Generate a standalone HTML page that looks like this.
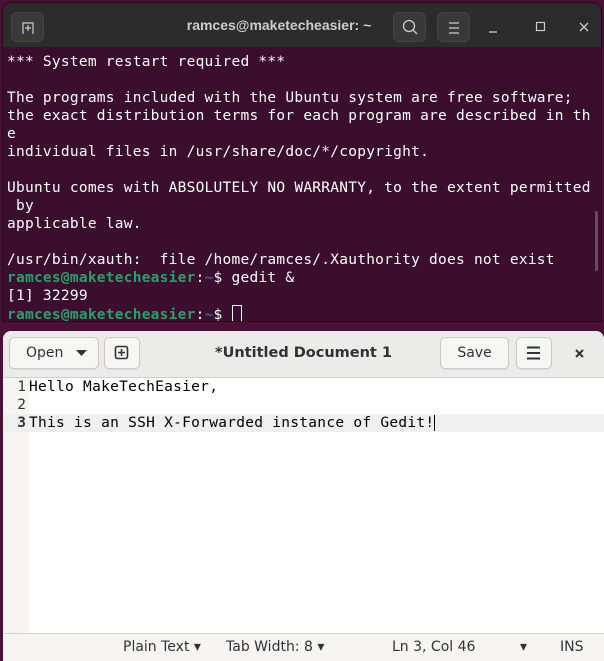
<!DOCTYPE html>
<html><head><meta charset="utf-8"><style>
*{margin:0;padding:0;box-sizing:border-box}
body{width:604px;height:661px;overflow:hidden;background:#4a1036;font-family:"Liberation Sans","DejaVu Sans",sans-serif;position:relative}
.term{position:absolute;left:2px;top:2px;width:600px;height:320px;background:#3a0e2c;border-radius:10px 10px 0 0;overflow:hidden;border:1px solid #2a0820}
.tbar{height:44px;background:#2c2c2c;position:relative;color:#ddd}
.tbtn{position:absolute;top:9px;width:33px;height:30px;border-radius:6px;background:#393939;border:1px solid #444}
.ttl{position:absolute;left:0;width:552px;text-align:center;top:14px;font-weight:bold;font-size:14px;color:#ccc;font-family:"Liberation Sans",sans-serif}
.tt{font-family:"DejaVu Sans Mono","Liberation Mono",monospace;font-size:14.5px;line-height:18px;color:#fff;white-space:pre;padding:6px 0 0 4px;letter-spacing:0.25px}
.g{color:#26a269;font-weight:bold}.b{color:#3465a4;font-weight:bold}
.ged{position:absolute;left:3px;top:331px;width:601px;height:330px;background:#fff;border-radius:8px 8px 0 0;overflow:hidden}
.hb{height:47px;background:#ebebea;border-bottom:1px solid #cfcfcd;position:relative;color:#2e3436;font-family:"DejaVu Sans",sans-serif}
.btn{position:absolute;top:6px;height:32px;border-radius:5px;background:#f6f6f5;border:1px solid #cdc7c2;font-size:14px;line-height:30px;text-align:center;box-shadow:0 1px 1px rgba(0,0,0,.07)}
.gut{position:absolute;left:0;top:47px;width:23px;bottom:28px;background:#f6f5f4}
.ed{position:absolute;left:0;top:47px;right:0;font-family:"DejaVu Sans Mono","Liberation Mono",monospace;font-size:14.5px;line-height:18px;color:#000}
.ln{display:flex;height:18px;white-space:pre}.ln span:first-child{width:26px;text-align:right;padding-right:3px;color:#333}
.ln span+span{letter-spacing:0.28px}
.cur{background:#efefef}
.sb{position:absolute;left:0;right:0;bottom:0;height:28px;background:#f6f5f4;border-top:1px solid #d6d1cd;font-family:"DejaVu Sans",sans-serif;font-size:14px;color:#2e3436}
.sb span{position:absolute;top:5px}
</style></head><body>
<div class="term">
 <div class="tbar">
  <div class="tbtn" style="left:8px"><svg width="33" height="30"><path d="M11 21V10h10v11M16 12v6M13 15h6" stroke="#ccc" fill="none" stroke-width="1.2"/></svg></div>
  <div class="ttl">ramces@maketecheasier: ~</div>
  <div class="tbtn" style="left:390px"><svg width="33" height="30"><circle cx="15" cy="13" r="5.5" stroke="#ccc" fill="none" stroke-width="1.3"/><path d="M19 17l4 4" stroke="#ccc" stroke-width="1.3"/></svg></div>
  <div class="tbtn" style="left:434px"><svg width="33" height="30"><path d="M11 10h10M11 15h10M11 20h10" stroke="#ccc" stroke-width="1.2"/></svg></div>
  <svg style="position:absolute;left:480px;top:14px" width="110" height="20"><path d="M6 15h8" stroke="#ccc" stroke-width="1.3"/><rect x="53.5" y="5.5" width="8" height="8" stroke="#ccc" fill="none" stroke-width="1.2"/><path d="M97 6l8 8M105 6l-8 8" stroke="#ccc" stroke-width="1.3"/></svg>
 </div>
 <div class="tt">*** System restart required ***

The programs included with the Ubuntu system are free software;
the exact distribution terms for each program are described in th
e
individual files in /usr/share/doc/*/copyright.

Ubuntu comes with ABSOLUTELY NO WARRANTY, to the extent permitted
 by
applicable law.

/usr/bin/xauth:  file /home/ramces/.Xauthority does not exist
<span class="g">ramces@maketecheasier</span>:<span class="b">~</span>$ gedit &amp;
[1] 32299
<span class="g">ramces@maketecheasier</span>:<span class="b">~</span>$ <span style="display:inline-block;width:10px;height:18px;border:1px solid #fff;vertical-align:-4px"></span></div>
 <div style="position:absolute;right:3px;top:208px;width:3px;height:60px;background:#6a4a60;border-radius:2px"></div>
</div>
<div class="ged">
 <div class="hb">
  <div class="btn" style="left:6px;width:90px;text-align:left;padding-left:16px">Open <svg style="position:absolute;left:66px;top:12px" width="12" height="8"><path d="M0 0h11l-5.5 6z" fill="#2e3436"/></svg></div>
  <div class="btn" style="left:101px;width:36px"><svg width="34" height="30"><rect x="10.5" y="8.5" width="12" height="12" rx="2" stroke="#2e3436" fill="none" stroke-width="1.6"/><path d="M16.5 11v7M13 14.5h7" stroke="#2e3436" stroke-width="1.6"/></svg></div>
  <div style="position:absolute;left:212px;top:14px;font-weight:bold;font-size:14.5px">*Untitled Document 1</div>
  <div class="btn" style="left:437px;width:69px">Save</div>
  <div class="btn" style="left:513px;width:36px"><svg width="34" height="30"><path d="M10 9.5h13M10 15h13M10 20.5h13" stroke="#2e3436" stroke-width="2"/></svg></div>
  <svg style="position:absolute;left:571px;top:17px" width="12" height="12"><path d="M2 2l7 7M9 2l-7 7" stroke="#2e3436" stroke-width="2"/></svg>
 </div>
 <div class="gut" style="width:26px"></div>
 <div class="ed"><div class="ln"><span>1</span><span>Hello MakeTechEasier,</span></div><div class="ln"><span>2</span><span></span></div><div class="ln cur"><span style="font-weight:bold">3</span><span>This is an SSH X-Forwarded instance of Gedit!<span style="border-left:1px solid #000"></span></span></div></div>
 <div class="sb">
  <span style="left:120px">Plain Text ▾</span>
  <span style="left:223px">Tab Width: 8 ▾</span>
  <span style="left:389px">Ln 3, Col 46</span>
  <span style="left:517px">▾</span>
  <span style="left:557px">INS</span>
 </div>
</div>
</body></html>
